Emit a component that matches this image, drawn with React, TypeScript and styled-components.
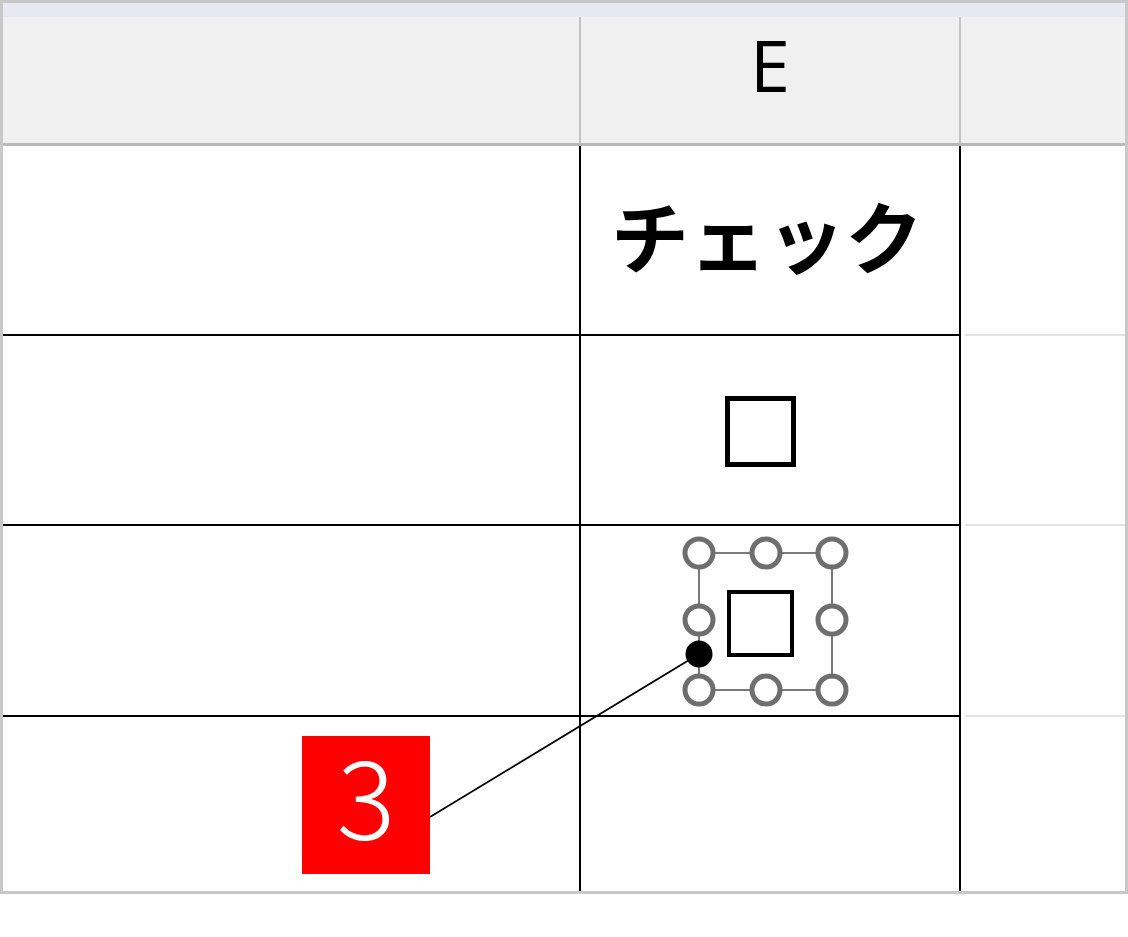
import React from 'react'
import styled, { createGlobalStyle } from 'styled-components'

const GlobalStyle = createGlobalStyle`
  html, body {
    margin: 0;
    padding: 0;
    background: #ffffff;
  }
  body {
    width: 1128px;
    height: 937px;
    overflow: hidden;
    font-family: 'Noto Sans CJK JP', 'Noto Sans', sans-serif;
  }
`

const COLS = '576px 382px 1fr'

type Row = {
  height: number
  label?: string
  box?: 'plain' | 'selected'
}

const rows: Row[] = [
  { height: 190, label: 'チェック' },
  { height: 190, box: 'plain' },
  { height: 191, box: 'selected' },
  { height: 174 },
]

const handleXs = [699, 766, 832]
const handleYs = [553, 620, 690]

const App: React.FC = () => {
  return (
    <>
      <GlobalStyle />
      <Stage>
        <Sheet>
          <TopStrip />
          <HeaderRow>
            <HeaderCell />
            <HeaderCell divided>E</HeaderCell>
            <HeaderCell />
          </HeaderRow>
          {rows.map((row, i) => {
            const last = i === rows.length - 1
            return (
              <BodyRow key={i} style={{ height: row.height }} last={last}>
                <Cell last={last} />
                <MainCell last={last} nudge={row.box === 'selected' ? 6 : row.box === 'plain' ? 3 : 0}>
                  {row.label && <Heading>{row.label}</Heading>}
                  {row.box === 'plain' && <CheckBox size={71} stroke={5} />}
                  {row.box === 'selected' && <CheckBox size={67} stroke={4} />}
                </MainCell>
                <SideCell last={last} />
              </BodyRow>
            )
          })}
        </Sheet>

        <Overlay width="1128" height="937" viewBox="0 0 1128 937">
          <rect
            x={handleXs[0]}
            y={handleYs[0]}
            width={handleXs[2] - handleXs[0]}
            height={handleYs[2] - handleYs[0]}
            stroke="#7a7a7a"
            strokeWidth="2"
            fill="none"
          />
          {handleYs.map((y) =>
            handleXs.map((x) =>
              x === handleXs[1] && y === handleYs[1] ? null : (
                <circle key={`${x}-${y}`} cx={x} cy={y} r={14} fill="#ffffff" stroke="#6e6e6e" strokeWidth="5" />
              ),
            ),
          )}
          <line x1={699} y1={654} x2={430} y2={817} stroke="#000000" strokeWidth="1.8" />
          <circle cx={699} cy={654} r={13.5} fill="#000000" />
        </Overlay>

        <Callout>3</Callout>
      </Stage>
    </>
  )
}

const Stage = styled.div`
  position: relative;
  width: 1128px;
  height: 937px;
`

const Sheet = styled.div`
  width: 1128px;
  height: 894px;
  box-sizing: border-box;
  border: 3px solid #c8c8c8;
  display: flex;
  flex-direction: column;
  background: #ffffff;
`

const TopStrip = styled.div`
  height: 14px;
  background: #e6e9f0;
`

const HeaderRow = styled.div`
  display: grid;
  grid-template-columns: ${COLS};
  height: 126px;
  border-bottom: 3px solid #b9b9b9;
  background: #f0f0f0;
`

const HeaderCell = styled.div<{ divided?: boolean }>`
  display: flex;
  align-items: center;
  justify-content: center;
  box-sizing: border-box;
  border-left: ${({ divided }) => (divided ? '2px solid #c3c3c3' : 'none')};
  border-right: ${({ divided }) => (divided ? '2px solid #c3c3c3' : 'none')};
  font-family: 'Open Sans', 'Liberation Sans', sans-serif;
  font-size: 72px;
  font-weight: 400;
  line-height: 1;
  color: #000000;
  padding-bottom: 32px;
`

const BodyRow = styled.div<{ last?: boolean }>`
  display: grid;
  grid-template-columns: ${COLS};
  flex: ${({ last }) => (last ? '1 1 auto' : '0 0 auto')};
`

const Cell = styled.div<{ last?: boolean }>`
  box-sizing: border-box;
  border-bottom: ${({ last }) => (last ? 'none' : '2px solid #000000')};
`

const MainCell = styled.div<{ last?: boolean; nudge: number }>`
  display: flex;
  align-items: center;
  justify-content: center;
  box-sizing: border-box;
  border-left: 2px solid #000000;
  border-right: 2px solid #000000;
  border-bottom: ${({ last }) => (last ? 'none' : '2px solid #000000')};
  padding-top: ${({ nudge }) => nudge}px;
`

const SideCell = styled.div<{ last?: boolean }>`
  box-sizing: border-box;
  border-bottom: ${({ last }) => (last ? 'none' : '2px solid #e4e4e4')};
  margin-left: 4px;
`

const Heading = styled.div`
  font-family: 'Noto Sans CJK JP', 'Noto Sans', sans-serif;
  font-weight: 700;
  font-size: 78px;
  line-height: 1;
  color: #000000;
  margin-right: 6px;
  margin-bottom: 12px;
`

const CheckBox = styled.span<{ size: number; stroke: number }>`
  display: block;
  box-sizing: border-box;
  width: ${({ size }) => size}px;
  height: ${({ size }) => size}px;
  border: ${({ stroke }) => stroke}px solid #000000;
  background: #ffffff;
  margin-right: 20px;
`

const Overlay = styled.svg`
  position: absolute;
  top: 0;
  left: 0;
  pointer-events: none;
`

const Callout = styled.div`
  position: absolute;
  left: 302px;
  top: 736px;
  width: 128px;
  height: 138px;
  background: #ff0000;
  color: #ffffff;
  display: flex;
  align-items: center;
  justify-content: center;
  font-family: 'Noto Sans CJK JP', 'Noto Sans', sans-serif;
  font-weight: 300;
  font-size: 110px;
  line-height: 1;
  padding-bottom: 26px;
  box-sizing: border-box;
`

export default App
